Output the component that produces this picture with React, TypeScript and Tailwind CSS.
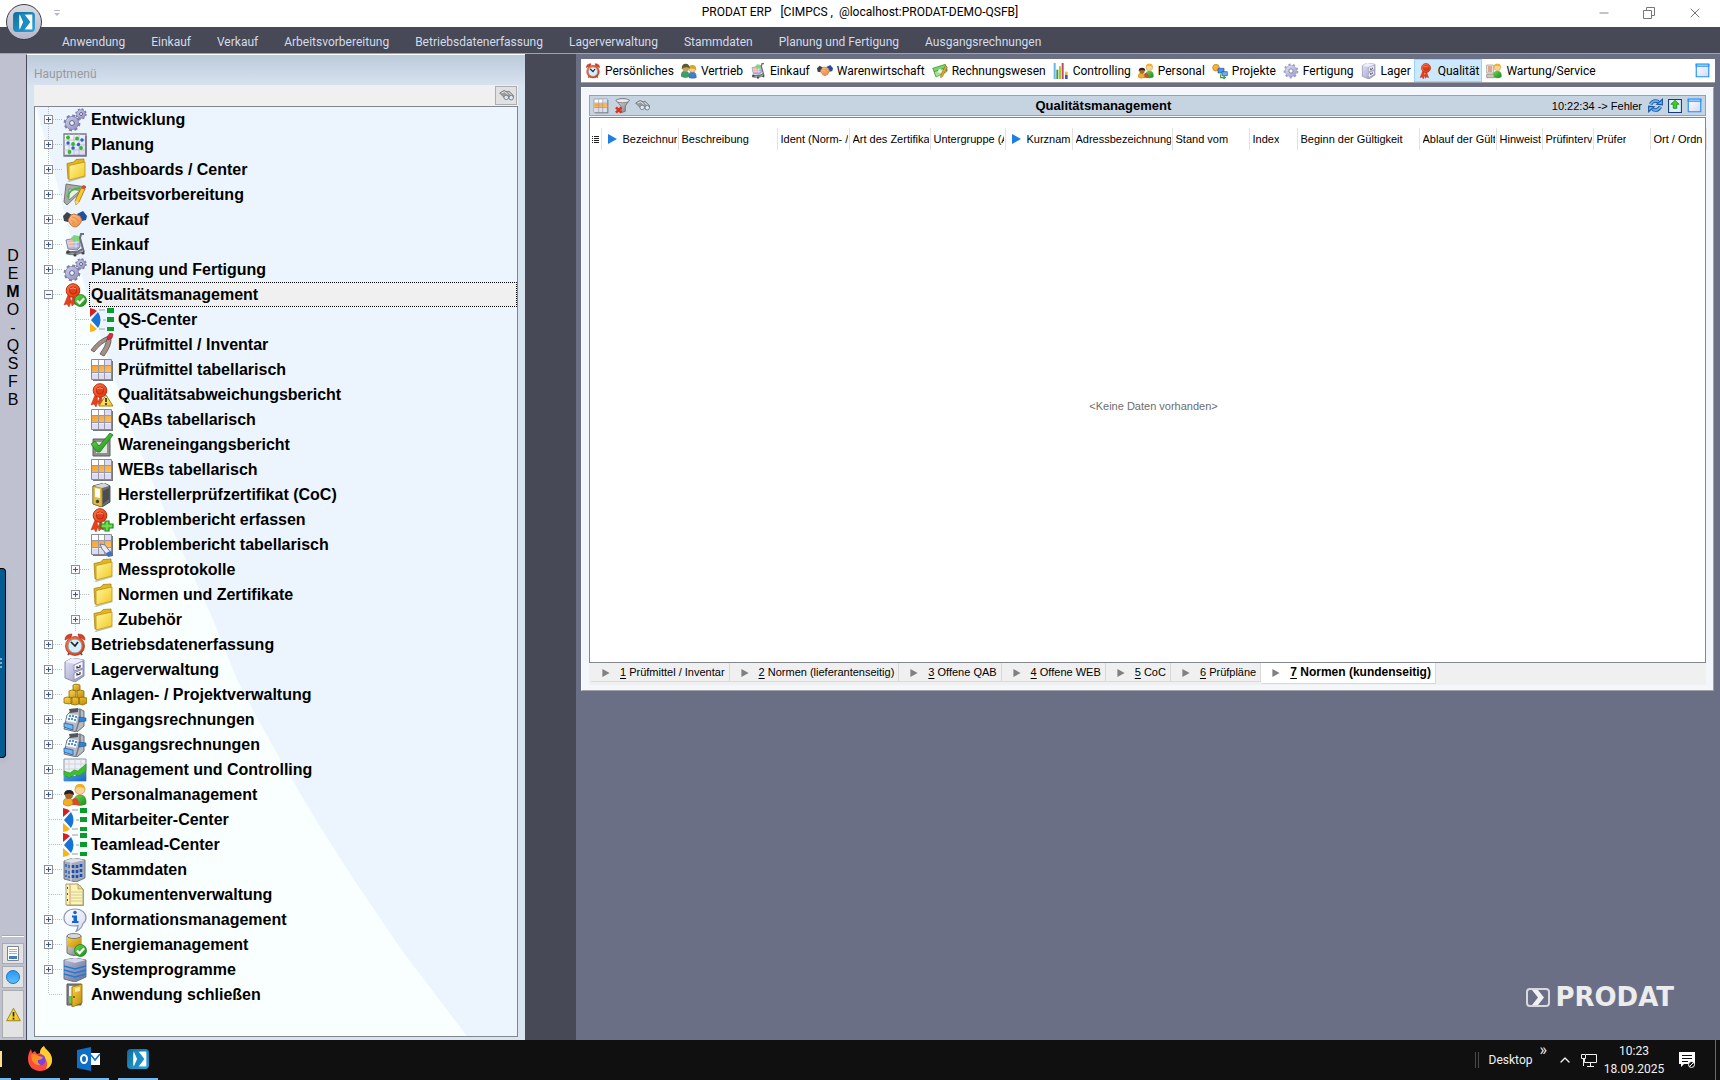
import React, { useState } from 'react';
import { ChevronUp, Minus, X } from 'lucide-react';

type IconName =
  | 'gears' | 'gear' | 'plan' | 'folder' | 'draft' | 'hands' | 'cart' | 'sealCheck' | 'sealWarn' | 'sealPlus' | 'seal'
  | 'center' | 'pliers' | 'grid' | 'gridEdit' | 'check' | 'binder' | 'clock' | 'cabinet' | 'gold' | 'register' | 'chart'
  | 'people' | 'building' | 'notes' | 'info' | 'battery' | 'server' | 'door' | 'money' | 'bars' | 'project' | 'couple'
  | 'service' | 'binoculars' | 'filter' | 'window' | 'refresh' | 'export' | 'warn';

const seal = (
  <g>
    <path d="M5 12 1 22l3-1 2 3 4-10zM11 13l3 9-3-1-2 2-2-9z" fill="#e8401c" stroke="#b52a10" strokeWidth=".5" />
    <circle cx="10" cy="7.500" r="6.800" fill="url(#red)" stroke="#c22a0c" strokeWidth="1" />
    <circle cx="10" cy="7.500" r="3.600" fill="#e63f1d" stroke="#a92508" strokeWidth=".8" />
    <path d="M7 6q3-2.500 6 0" fill="none" stroke="#ff9a72" />
  </g>
);

const checkBadge = (
  <g>
    <circle cx="17.500" cy="17.500" r="6" fill="url(#green)" stroke="#1d7a1a" strokeWidth=".8" />
    <path d="m14 17.500 2.600 2.700 4.600-5" fill="none" stroke="#fff" strokeWidth="2.200" />
  </g>
);

const grid = (
  <g>
    <path d="M3 3h20v20H3z" fill="#777" />
    <path d="M1.500 1.500h20v20h-20z" fill="#fff" stroke="#8a8a94" />
    <path d="M2 15.500h19v5.500H2zM15 2h6v5h-6z" fill="#dcdcf6" />
    <path d="M2 8h19v7H2z" fill="url(#orange)" />
    <path d="M8.500 2v19M14.500 2v19M2 7.500h19M2 14.500h19" stroke="#9a9aa4" strokeWidth="1" />
  </g>
);

const bigGear = (
  <g>
    <circle cx="9" cy="15" r="6.600" fill="none" stroke="#7c7ca8" strokeWidth="3.600" strokeDasharray="2.800 2.380" />
    <circle cx="9" cy="15" r="6.600" fill="url(#gearFill)" stroke="#8484b0" strokeWidth=".8" />
    <circle cx="9" cy="15" r="2.400" fill="#eef4fb" stroke="#62628e" strokeWidth="1" />
  </g>
);

const person = (
  <g>
    <path d="M11 21q-1-9 6-9t6 9q-6 3-12 0z" fill="url(#green)" stroke="#3a8a35" strokeWidth=".6" />
    <circle cx="17" cy="6.500" r="5" fill="#fbd39a" stroke="#c88a30" strokeWidth=".7" />
    <path d="M12 6q0-5 5-5t5 5q-3-2-6-2-2 0-4 2z" fill="#f2b21e" />
  </g>
);

const icons: Record<IconName, React.ReactNode> = {
  gears: (
    <g>
      {bigGear}
      <circle cx="18" cy="6" r="4.300" fill="none" stroke="#7c7ca8" strokeWidth="2.800" strokeDasharray="1.800 1.570" />
      <circle cx="18" cy="6" r="4.300" fill="url(#gearFill)" stroke="#8484b0" strokeWidth=".8" />
      <circle cx="18" cy="6" r="1.500" fill="#eef4fb" stroke="#62628e" />
    </g>
  ),
  gear: (
    <g>
      <circle cx="12" cy="12" r="8.800" fill="none" stroke="#9e9ec2" strokeWidth="4.600" strokeDasharray="3 3.140" />
      <circle cx="12" cy="12" r="8.600" fill="url(#lilac)" stroke="#a2a2c4" />
      <circle cx="12" cy="12" r="3.200" fill="#fff" stroke="#8080a8" strokeWidth="1.400" />
    </g>
  ),
  plan: (
    <g>
      <path d="M1 1h22v22H1z" fill="url(#paper)" stroke="#77778c" strokeWidth="1.300" />
      <path d="M6 1v21M11 1v21M16 1v21M1 7h21M1 12h21M1 17h21" stroke="#c2c2d8" />
      <path d="M2 22.500h21V3" stroke="#77778c" strokeWidth="1.600" fill="none" />
      <g fill="#38b81c"><circle cx="5" cy="4.500" r="1.900" /><circle cx="14" cy="5.500" r="1.900" /><circle cx="10" cy="11" r="1.900" /><circle cx="18" cy="15" r="1.900" /><circle cx="6.500" cy="19" r="1.900" /></g>
      <g fill="#2360d4"><circle cx="5" cy="10" r="1.700" /><circle cx="15.500" cy="11.500" r="1.700" /><circle cx="19" cy="7" r="1.700" /><circle cx="10" cy="15" r="1.700" /></g>
    </g>
  ),
  folder: (
    <g>
      <path d="m4 23 18-5 1 1-17 5z" fill="#9a9a8a" opacity=".6" />
      <path d="M4 5.500 11 4l2-2.500L21 1v16L5 21z" fill="#e5b51d" stroke="#a98312" strokeWidth=".8" />
      <path d="M6 7.500 22 4v14L6 22z" fill="url(#yellow)" stroke="#bd9312" strokeWidth=".8" />
    </g>
  ),
  draft: (
    <g>
      <path d="M3 1 23 4 4 22 1 19z" fill="#a7aaa8" stroke="#5f6461" strokeWidth=".8" />
      <path d="M6 6 17 7.500 6 17z" fill="#e9f2ea" stroke="#767c78" strokeWidth=".8" />
      <path d="M5 15Q5 6 17 5" fill="none" stroke="#3fb53a" strokeWidth="1.500" />
      <path d="m18 5 4 1-6 13-3 3-1-4z" fill="#f7c92a" stroke="#a66e15" strokeWidth=".8" />
      <path d="m18 5 4 1 1-3-3-1z" fill="#d8492c" />
      <path d="m12 18 4 1-3 3z" fill="#f0d7ae" />
    </g>
  ),
  hands: (
    <g>
      <path d="m0 8 4-4 5 3-4 7-4-1z" fill="#3d4250" />
      <path d="m24 8-4-5-6 3 5 7 4-1z" fill="#1f4fa5" />
      <path d="m5 12 3-5 3-1 6 2 2 4q-3 7-7 7t-7-7z" fill="url(#skin)" stroke="#b5652a" strokeWidth=".8" />
      <path d="m9 9 4 1 3 4M8 12l4 3M9 15l3 2" fill="none" stroke="#d98342" strokeWidth=".8" />
    </g>
  ),
  cart: (
    <g>
      <path d="M3 20q8 3 16-1" stroke="#80848c" strokeWidth="2" fill="none" />
      <path d="m3 7 14-3v10l-3 3-9-1z" fill="url(#lilac)" stroke="#85889a" strokeWidth="1" />
      <path d="m8 5 3-3 5 1v5l-6 2z" fill="#7ed67a" />
      <path d="m5 8 5-1v6l-4 1z" fill="#f6b39e" />
      <path d="M4 10l12-1M5 13h11M13 8v7" stroke="#e6e6f8" strokeWidth=".8" fill="none" />
      <path d="M21 1h-3l-1 4 3 11-6 3H6m14-3 1 3" fill="none" stroke="#6c707a" strokeWidth="2" />
      <circle cx="5" cy="19" r="1.800" fill="#444" /><circle cx="12" cy="22" r="1.600" fill="#444" /><circle cx="20" cy="20" r="1.600" fill="#444" />
    </g>
  ),
  seal: <g transform="translate(2 0)">{seal}</g>,
  sealCheck: <g>{seal}{checkBadge}</g>,
  sealWarn: (
    <g>
      {seal}
      <path d="m16 12 7 11H9z" fill="url(#yellow)" stroke="#a98312" strokeLinejoin="round" />
      <path d="M16 15v4m0 1v2" stroke="#222" strokeWidth="1.600" />
    </g>
  ),
  sealPlus: (
    <g>
      {seal}
      <path d="M15 13h4v3h4v4h-4v3h-4v-3h-4v-4h4z" fill="#6fdc4a" stroke="#1f8418" strokeWidth="1.200" />
    </g>
  ),
  center: (
    <g>
      <path d="M0 0q5 1 7 3L0 9z" fill="#d32020" />
      <path d="M1 12 8 4q5 8 0 16z" fill="#1673d8" />
      <path d="m0 15 7 6q-3 3-7 3z" fill="#fbb21a" />
      <path d="M9 2h6M13 12h3M9 21h6" stroke="#b9bec0" strokeWidth="1.500" />
      <path d="M17 0h7v5h-7zM17 9h7v5h-7zM17 19h7v4h-7z" fill="#089c28" />
    </g>
  ),
  pliers: (
    <g>
      <path d="M19 3Q9 6 1 17l3 2q8-10 15-12z" fill="#a58f89" stroke="#5e4c48" strokeWidth=".8" />
      <path d="M21 5q1 7-7 18l-4-2q6-8 7-15z" fill="#a58f89" stroke="#5e4c48" strokeWidth=".8" />
      <path d="m17 4 3-4 3 1-1 4-4 2z" fill="#e02838" stroke="#8e1420" strokeWidth=".6" />
    </g>
  ),
  grid,
  gridEdit: (
    <g>
      {grid}
      <path d="m10 11 5 1 6 8-3 3-6-7z" fill="#e9ebf4" stroke="#6f7693" />
      <path d="m16 20 5-2 2 5-5 1z" fill="#3f6fc0" />
    </g>
  ),
  check: (
    <g>
      <path d="M3 6h17v17H3z" fill="#8d8f8d" stroke="#5c5f5c" />
      <path d="M6 9h11v11H6z" fill="#e3e5e3" />
      <path d="m1 11 4-3 4 5L20 0l3 2L10 19H7z" fill="url(#green)" stroke="#1c7f19" strokeWidth=".8" />
    </g>
  ),
  binder: (
    <g>
      <path d="m3 3 11-3 6 3v16l-8 5-9-3z" fill="#6b6d70" stroke="#35373a" strokeWidth=".8" />
      <path d="m3 3 9 2v19l-9-3z" fill="#e2bb3b" stroke="#8d7420" strokeWidth=".6" />
      <path d="m5 5 5 1v9l-5-1z" fill="#fff" /><circle cx="7.500" cy="18.500" r="1.700" fill="#444" />
      <path d="m4 3 10-3 5 3-7 2z" fill="#d6d8da" />
      <path d="m13 8 6-3v11l-6 5z" fill="#4b4d50" />
    </g>
  ),
  clock: (
    <g>
      <path d="m5 22 3-4m11 4-3-4" stroke="#555" strokeWidth="2" />
      <path d="M2 7q0-6 7-6l-1 3zM22 7q0-6-7-6l1 3z" fill="#e2401c" stroke="#98240b" strokeWidth=".6" />
      <circle cx="12" cy="13" r="9.500" fill="url(#red)" stroke="#a92d10" strokeWidth=".7" />
      <circle cx="12" cy="13" r="7" fill="#d2effd" stroke="#8e9aa4" />
      <path d="m8 9 4 4 3-4" fill="none" stroke="#222" strokeWidth="1.700" />
    </g>
  ),
  cabinet: (
    <g>
      <path d="m2 4 7-4 12 2v16l-9 6-10-4z" fill="url(#lilac)" stroke="#7f7fa6" strokeWidth=".9" />
      <path d="m2 4 7-4 12 2-9 4z" fill="#eeeeff" />
      <path d="m11 7 9-4v7l-9 3zM11 15l9-4v6l-9 5z" fill="#f4f4ff" stroke="#8686ac" strokeWidth=".8" />
      <path d="M14 8v2l3-1V7M14 15v2l3-1v-2" fill="none" stroke="#333" strokeWidth="1.200" />
    </g>
  ),
  gold: (
    <g fill="url(#gold)" stroke="#8f6a06" strokeWidth=".8">
      <path d="m10 2 3-1 4 1v5l-3 1-4-1z" /><path d="m6 8 3-1 4 1v6l-3 1-4-1zM14 8l3-1 4 1v6l-3 1-4-1z" />
      <path d="m1 15 3-1 5 1v5l-3 1-5-1zM8 15l3-1 5 1v6l-4 1-4-1zM16 15l3-1 5 1v5l-4 2-4-1z" />
    </g>
  ),
  register: (
    <g>
      <path d="m9 2 8-1 4 2v15l-7 6-13-3 3-14z" fill="#b8bbc2" stroke="#5f6270" strokeWidth=".9" />
      <path d="M17 1v9l-4 13" fill="none" stroke="#777b88" strokeWidth="1.500" />
      <path d="m6 1 9-1v4l-8 1z" fill="#53565e" />
      <path d="m5 6 10 1-2 8-10-2z" fill="#f2f5fa" />
      <path d="M6 8h2m1 0h2m1 1h2M5 11h2m1 0h2m1 1h2" stroke="#1f75c8" strokeWidth="1.700" />
      <path d="m1 15 9 2v5l-9-3z" fill="#6fb6f4" stroke="#235f9e" strokeWidth=".8" />
      <path d="m16 9 7 1v3l-7 1z" fill="#2d83d6" stroke="#1b5490" strokeWidth=".6" />
    </g>
  ),
  chart: (
    <g>
      <path d="M1 1h22v22H1z" fill="#eef0f6" stroke="#8e95a6" />
      <path d="M6 1v20M12 1v20M18 1v20M1 6h22M1 11h22" stroke="#c9cdd9" strokeWidth=".8" />
      <path d="m1 18 6-1 5 1 5-5 6-2v12H1z" fill="url(#blue)" />
      <path d="m1 13 6 2 4-3 4 1 8-7v7l-7 5-4-2-6 4-5-3z" fill="#3cbf2c" stroke="#249419" strokeWidth=".6" />
    </g>
  ),
  people: (
    <g>
      {person}
      <path d="M8 22q0-7 4-7t4 7z" fill="#d94a28" />
      <path d="M0 21q0-6 5-6t5 6q-5 4-10 0z" fill="#f2ad24" stroke="#af7414" strokeWidth=".6" />
      <circle cx="6" cy="12" r="4" fill="#a9672d" /><path d="M1 12q0-5 5-5t5 5q-5-3-10 0z" fill="#222" />
    </g>
  ),
  couple: (
    <g>
      <path d="M12 22q-1-9 5-9t6 9q-5 2-11 0z" fill="#3d7fd0" stroke="#1f4f94" strokeWidth=".6" />
      <circle cx="17" cy="9" r="5" fill="#f6cf8e" stroke="#b98416" strokeWidth=".6" /><path d="M11 10q0-7 6-7t6 8q-5-5-12-1z" fill="#d9a520" />
      <path d="M0 20q0-8 6-8t7 8q-6 4-13 0z" fill="#3f9f6a" stroke="#27754b" strokeWidth=".6" />
      <circle cx="7" cy="8" r="5" fill="#c9a45e" /><path d="M1 9q0-8 6-8t6 7q-6-4-12 1z" fill="#5c5a34" />
    </g>
  ),
  service: (
    <g>
      {person}
      <path d="M1 3h10v12H1z" fill="#f0efe4" stroke="#8c8c80" /><path d="M3 6h6M3 9h6M3 12h6" stroke="#d15b40" strokeWidth="1.500" />
      <path d="M1 17h11v5H1z" fill="#c9c9bc" stroke="#80806f" />
    </g>
  ),
  building: (
    <g>
      <path d="m1 3 9-3 12 2v18l-9 4-12-3z" fill="#a7aab8" stroke="#666a7c" strokeWidth=".9" />
      <path d="m1 3 9-3 12 2-13 3z" fill="#dfe1e8" />
      <path d="M8 5v18" stroke="#e3e5ec" />
      <path d="M10 7v3m4-3v3m4-4v3m-8 3v3m4-3v3m4-4v3m-8 3v3m4-3v3m4-4v3" stroke="#1452b8" strokeWidth="2.600" />
      <path d="M3 6v3m3-2v3m-3 2v3m3-2v3m-3 1v2m3-1v2" stroke="#3a6fc4" strokeWidth="1.800" />
    </g>
  ),
  notes: (
    <g>
      <path d="M4 2h13l4 5v16H4z" fill="#8f8b68" opacity=".7" />
      <path d="M3 1h12l5 5v16H3z" fill="#fcf5b8" stroke="#9b9566" strokeWidth=".9" />
      <path d="M15 1v5h5z" fill="#f0e27f" stroke="#9b9566" strokeWidth=".7" />
      <path d="M8 9h11M8 12h11M8 15h11M8 18h11" stroke="#c9c189" strokeWidth=".8" /><path d="M7 1v21" stroke="#e48a70" />
      <path d="M4 5h1m-1 6h1m-1 6h1" stroke="#222" strokeWidth="1.500" />
    </g>
  ),
  info: (
    <g>
      <path d="M12 1C5 1 1 5 1 10s4 8 10 8q3 0 4-.5 0 3-2 6 6-3 7-8 3-2 3-6c0-5-5-8.500-11-8.500z" fill="url(#paper)" stroke="#8f93b4" strokeWidth="1.200" />
      <circle cx="12" cy="4.500" r="1.800" fill="#1565d6" />
      <path d="M9 7.500h5V13h1.500v2H9v-2h1.500V9.500H9z" fill="#1565d6" />
    </g>
  ),
  battery: (
    <g>
      <path d="M4 3v17q7 5 14 0V3z" fill="url(#steel)" stroke="#57595c" strokeWidth=".8" />
      <path d="M4 3v10q7 3 14 0V3z" fill="url(#gold)" />
      <ellipse cx="11" cy="3" rx="7" ry="2.500" fill="#d6d8da" stroke="#666" strokeWidth=".8" />
      {checkBadge}
    </g>
  ),
  server: (
    <g>
      <path d="m1 2 11-2 11 2v17l-11 5-11-3z" fill="url(#steelBlue)" stroke="#646a8a" strokeWidth=".9" />
      <path d="m1 2 11-2 11 2-11 3z" fill="#d5d8e8" />
      <path d="m1 8 11 3 11-3M1 12l11 3 11-3M1 16l11 3 11-3" fill="none" stroke="#1f7ad6" strokeWidth="1.500" />
    </g>
  ),
  door: (
    <g>
      <path d="M4 1h14v21H4z" fill="#7d8088" stroke="#585b62" /><path d="M6 3h9v17H6z" fill="#e8f4e6" />
      <path d="M6 13h4v7H6z" fill="#62cf3e" />
      <path d="M9 4 19 1v19L9 24z" fill="url(#gold)" stroke="#906806" strokeWidth=".8" />
      <path d="m12 5 5-1v4l-5 1z" fill="#fbe9a2" /><circle cx="11" cy="14" r="1" fill="#6b4c00" />
    </g>
  ),
  money: (
    <g>
      <path d="M1 8 20 2l3 9L6 19z" fill="#7fd36b" stroke="#2c8a28" /><path d="m3 13 18-6 1 6L6 21z" fill="#a7e490" stroke="#2c8a28" />
      <circle cx="12" cy="12" r="3" fill="#e7f9dd" /><path d="m20 4 3 2-7 14-3 2v-3z" fill="#f0a03a" stroke="#9a5b14" strokeWidth=".8" />
    </g>
  ),
  bars: (
    <g>
      <path d="M1 0h3v24H1z" fill="#6ab6ec" /><path d="M5 10h3v14H5z" fill="#3f9a3e" /><path d="M9 5h3v19H9z" fill="#a4c93c" />
      <path d="M13 0h3v24h-3z" fill="#c9466e" /><path d="M18 18h4v6h-4z" fill="#3657c8" /><path d="M18 13h4v5h-4z" fill="#f0b840" />
    </g>
  ),
  project: (
    <g>
      <circle cx="6" cy="7" r="5" fill="#f6b33a" stroke="#c07a14" /><path d="M9 8h9v7H9z" fill="#4c95e8" stroke="#1f4c9e" />
      <path d="M15 13h8v6h-8z" fill="#6fb0f4" stroke="#1f4c9e" /><path d="M13 17v5h6m-2-3 3 3-3 2" fill="none" stroke="#38a52c" strokeWidth="1.800" />
    </g>
  ),
  binoculars: (
    <g>
      <path d="m1 8 7-4 5 2 3-1 7 7v3l-4 4-5-4-4 2-5-5z" fill="#9b9da0" stroke="#5b5d60" />
      <circle cx="11.500" cy="15" r="3.600" fill="#dcebf8" stroke="#6d7278" strokeWidth="1.300" /><circle cx="19.500" cy="15.500" r="3.600" fill="#dcebf8" stroke="#6d7278" strokeWidth="1.300" />
      <path d="m4 8 5-2 5 4m1-3 5 4" stroke="#e6e8ea" strokeWidth="1.500" fill="none" />
    </g>
  ),
  filter: (
    <g>
      <path d="M3 3q10-4 20 0l-6 9v8l-6 2v-9z" fill="url(#steel)" stroke="#5c5e62" /><ellipse cx="13" cy="4" rx="10" ry="3" fill="#e8eaec" stroke="#66686c" />
      <path d="m3 14 8 8m0-8-8 8" stroke="#e0301e" strokeWidth="3.800" />
    </g>
  ),
  window: (
    <g>
      <path d="M2 2h20v20H2z" fill="url(#paper)" stroke="#1e90ff" strokeWidth="1.800" /><path d="M1 1h22v5H1z" fill="#1e90ff" /><path d="M3 2.500h18v2H3z" fill="#a8d6ff" />
    </g>
  ),
  refresh: (
    <g fill="none" stroke="#1c55a4" strokeWidth="5.500">
      <path d="M4 10q5-8 13-4M20 14q-5 8-13 4" /><path d="m14 10 9 1V2zM10 14l-9-1v9z" fill="#62b1f2" strokeWidth="1.800" />
      <path d="M4 10q5-8 13-4M20 14q-5 8-13 4" stroke="#62b1f2" strokeWidth="2.800" />
    </g>
  ),
  export: (
    <g>
      <path d="M1 1h22v22H1z" fill="#d9f0fb" stroke="#16387e" strokeWidth="1.800" /><path d="m12 2 7 7h-4v7H9V9H5z" fill="#3fd01c" stroke="#157a0a" strokeWidth="1.200" />
    </g>
  ),
  warn: (
    <g>
      <path d="m12 2 11 20H1z" fill="url(#yellowDeep)" stroke="#93812c" strokeWidth="1.500" strokeLinejoin="round" /><path d="M12 8v7m0 2v3" stroke="#222" strokeWidth="2.600" />
    </g>
  ),
};

const Icon = ({ name, className }: { name: IconName; className: string }) => (
  <svg viewBox="0 0 24 24" className={className} aria-hidden="true">{icons[name]}</svg>
);

const gradients: [string, string, string][] = [
  ['red', '#ff7a4c', '#dd2f0c'],
  ['green', '#6fdc4f', '#178a1a'],
  ['orange', '#f6a030', '#ffc468'],
  ['lilac', '#e4e4fb', '#9a9ac4'],
  ['gearFill', '#cfcfee', '#8f8fbc'],
  ['paper', '#ffffff', '#d4d8f2'],
  ['yellow', '#fff6a0', '#f2c81c'],
  ['yellowDeep', '#fff04a', '#f0c010'],
  ['skin', '#ffc48c', '#f08a3c'],
  ['gold', '#fcd548', '#c08a08'],
  ['blue', '#5aaef4', '#1c66c4'],
  ['steel', '#e2e4e6', '#77797c'],
  ['steelBlue', '#b8bdd6', '#666d94'],
  ['brand', '#0f6c9c', '#2ba6dc'],
];

const Gradients = () => (
  <svg className="absolute size-0" aria-hidden="true">
    <defs>
      {gradients.map(([id, from, to]) => (
        <linearGradient key={id} id={id} x1="0" y1="0" x2="1" y2="1">
          <stop offset="0" stopColor={from} />
          <stop offset="1" stopColor={to} />
        </linearGradient>
      ))}
    </defs>
  </svg>
);

const BrandMark = ({ className }: { className: string }) => (
  <svg viewBox="0 0 24 22" className={className} aria-hidden="true">
    <rect x="0" y="0" width="24" height="22" rx="4" fill="url(#brand)" />
    <path d="M7 3h14v16H7z" fill="#fff" />
    <path d="M7 2h5l7 9-7 9H7l4-9z" fill="#1b8cc4" />
    <path d="M7 4v14l3-7zM14 3h7v16h-7l6-8z" fill="#fff" />
  </svg>
);

interface TreeItem {
  label: string;
  icon: IconName;
  expandable?: boolean;
  children?: TreeItem[];
}

const tree: TreeItem[] = [
  { label: 'Entwicklung', icon: 'gears', expandable: true },
  { label: 'Planung', icon: 'plan', expandable: true },
  { label: 'Dashboards / Center', icon: 'folder', expandable: true },
  { label: 'Arbeitsvorbereitung', icon: 'draft', expandable: true },
  { label: 'Verkauf', icon: 'hands', expandable: true },
  { label: 'Einkauf', icon: 'cart', expandable: true },
  { label: 'Planung und Fertigung', icon: 'gears', expandable: true },
  {
    label: 'Qualitätsmanagement',
    icon: 'sealCheck',
    expandable: true,
    children: [
      { label: 'QS-Center', icon: 'center' },
      { label: 'Prüfmittel / Inventar', icon: 'pliers' },
      { label: 'Prüfmittel tabellarisch', icon: 'grid' },
      { label: 'Qualitätsabweichungsbericht', icon: 'sealWarn' },
      { label: 'QABs tabellarisch', icon: 'grid' },
      { label: 'Wareneingangsbericht', icon: 'check' },
      { label: 'WEBs tabellarisch', icon: 'grid' },
      { label: 'Herstellerprüfzertifikat (CoC)', icon: 'binder' },
      { label: 'Problembericht erfassen', icon: 'sealPlus' },
      { label: 'Problembericht tabellarisch', icon: 'gridEdit' },
      { label: 'Messprotokolle', icon: 'folder', expandable: true },
      { label: 'Normen und Zertifikate', icon: 'folder', expandable: true },
      { label: 'Zubehör', icon: 'folder', expandable: true },
    ],
  },
  { label: 'Betriebsdatenerfassung', icon: 'clock', expandable: true },
  { label: 'Lagerverwaltung', icon: 'cabinet', expandable: true },
  { label: 'Anlagen- / Projektverwaltung', icon: 'gold', expandable: true },
  { label: 'Eingangsrechnungen', icon: 'register', expandable: true },
  { label: 'Ausgangsrechnungen', icon: 'register', expandable: true },
  { label: 'Management und Controlling', icon: 'chart', expandable: true },
  { label: 'Personalmanagement', icon: 'people', expandable: true },
  { label: 'Mitarbeiter-Center', icon: 'center' },
  { label: 'Teamlead-Center', icon: 'center' },
  { label: 'Stammdaten', icon: 'building', expandable: true },
  { label: 'Dokumentenverwaltung', icon: 'notes' },
  { label: 'Informationsmanagement', icon: 'info', expandable: true },
  { label: 'Energiemanagement', icon: 'battery', expandable: true },
  { label: 'Systemprogramme', icon: 'server', expandable: true },
  { label: 'Anwendung schließen', icon: 'door' },
];

const menu = ['Anwendung', 'Einkauf', 'Verkauf', 'Arbeitsvorbereitung', 'Betriebsdatenerfassung', 'Lagerverwaltung', 'Stammdaten', 'Planung und Fertigung', 'Ausgangsrechnungen'];

const areas: { label: string; icon: IconName }[] = [
  { label: 'Persönliches', icon: 'clock' },
  { label: 'Vertrieb', icon: 'couple' },
  { label: 'Einkauf', icon: 'cart' },
  { label: 'Warenwirtschaft', icon: 'hands' },
  { label: 'Rechnungswesen', icon: 'money' },
  { label: 'Controlling', icon: 'bars' },
  { label: 'Personal', icon: 'people' },
  { label: 'Projekte', icon: 'project' },
  { label: 'Fertigung', icon: 'gear' },
  { label: 'Lager', icon: 'cabinet' },
  { label: 'Qualität', icon: 'seal' },
  { label: 'Wartung/Service', icon: 'service' },
];

const columns: { label: string; width: string; marked?: boolean }[] = [
  { label: 'Bezeichnun', width: 'w-[77px]', marked: true },
  { label: 'Beschreibung', width: 'w-[99px]' },
  { label: 'Ident (Norm- /', width: 'w-[72px]' },
  { label: 'Art des Zertifika', width: 'w-[81px]' },
  { label: 'Untergruppe (A', width: 'w-[75px]' },
  { label: 'Kurznam', width: 'w-[67px]', marked: true },
  { label: 'Adressbezeichnung', width: 'w-[100px]' },
  { label: 'Stand vom', width: 'w-[77px]' },
  { label: 'Index', width: 'w-[48px]' },
  { label: 'Beginn der Gültigkeit', width: 'w-[122px]' },
  { label: 'Ablauf der Gült', width: 'w-[77px]' },
  { label: 'Hinweist', width: 'w-[46px]' },
  { label: 'Prüfinterv', width: 'w-[51px]' },
  { label: 'Prüfer', width: 'w-[57px]' },
  { label: 'Ort / Ordn', width: 'w-[56px]' },
];

const tabs = ['Prüfmittel / Inventar', 'Normen (lieferantenseitig)', 'Offene QAB', 'Offene WEB', 'CoC', 'Prüfpläne', 'Normen (kundenseitig)'];

// Connector lines of one tree level, 27 x 25 per cell
const Branch = ({ last, line = true }: { last?: boolean; line?: boolean }) => (
  <svg viewBox="0 0 27 25" className="h-[25px] w-[27px] shrink-0" aria-hidden="true">
    <path d={last ? 'M13.500 0v12' : 'M13.500 0v25'} stroke="#b9bcc2" strokeDasharray="1 1" />
    {line && <path d="M14 12.500h13" stroke="#b9bcc2" strokeDasharray="1 1" />}
  </svg>
);

const Expander = ({ open, label, onClick }: { open: boolean; label: string; onClick: () => void }) => (
  <button type="button" aria-label={label} onClick={onClick} className="shrink-0">
    <svg viewBox="0 0 27 25" className="h-[25px] w-[27px]" aria-hidden="true">
      <path d="M13.500 0v8M13.500 17v8M18 12.500h9" stroke="#b9bcc2" strokeDasharray="1 1" />
      <rect x="9.500" y="8.500" width="8" height="8" fill="#fafafa" stroke="#8f8f8f" />
      <path d={open ? 'M11 12.500h5' : 'M11 12.500h5M13.500 10v5'} stroke="#3a55a4" />
    </svg>
  </button>
);

interface TreeRowProps {
  item: TreeItem;
  nested?: boolean;
  last?: boolean;
  selected: string;
  onSelect: (label: string) => void;
}

const TreeRow = ({ item, nested, last, selected, onSelect }: TreeRowProps) => {
  const [open, setOpen] = useState(Boolean(item.children));
  return (
    <li>
      <div className="flex h-[25px] items-center">
        {nested && <Branch line={false} />}
        {item.expandable ? (
          <Expander open={open && Boolean(item.children)} label={`${item.label} auf- oder zuklappen`} onClick={() => setOpen(!open)} />
        ) : (
          <Branch last={last} />
        )}
        <Icon name={item.icon} className="ml-px mr-[2px] size-6 shrink-0" />
        <button
          type="button"
          onClick={() => onSelect(item.label)}
          className={`h-[25px] flex-1 border border-dotted pl-px text-left text-[16px] leading-[23px] font-bold whitespace-nowrap ${
            selected === item.label ? 'border-black bg-[#f0f0f0]' : 'border-transparent'
          }`}
        >
          {item.label}
        </button>
      </div>
      {open && item.children && (
        <ul>
          {item.children.map((child) => (
            <TreeRow key={child.label} item={child} nested selected={selected} onSelect={onSelect} />
          ))}
        </ul>
      )}
    </li>
  );
};

const TitleBar = () => (
  <header className="relative">
    <div className="flex h-[27px] items-center bg-white">
      <div className="flex w-40 pl-[54px]">
        <svg viewBox="0 0 6 7" className="h-[7px] w-[6px]" aria-hidden="true">
          <path d="M0 .5h6" stroke="#b8b8c4" />
          <path d="M0 3h6L3 6z" fill="#b8b8c4" />
        </svg>
      </div>
      <h1 className="flex-1 pb-[3px] text-center text-[12px] leading-4 whitespace-pre text-black">{'PRODAT ERP   [CIMPCS ,  @localhost:PRODAT-DEMO-QSFB]'}</h1>
      <div className="flex w-40 justify-end gap-[32px] pr-[17px] pb-[2px] text-[#777]">
        <button type="button" aria-label="Minimieren"><Minus className="size-[14px]" strokeWidth={1.5} /></button>
        <button type="button" aria-label="Wiederherstellen">
          <svg viewBox="0 0 12 12" className="size-3" fill="none" stroke="currentColor" aria-hidden="true">
            <path d="M.5 3.500h8v8h-8zM3.500 3V.5h8v8H9" />
          </svg>
        </button>
        <button type="button" aria-label="Schließen"><X className="size-[16px]" strokeWidth={1.5} /></button>
      </div>
    </div>
    <nav className="flex h-[27px] items-center gap-[26px] border-b border-[#a3a3a8] bg-[#474957] pt-[3px] pl-[62px] text-[12px] text-[#d3dcea]">
      {menu.map((label) => (
        <a key={label} href="#" className="whitespace-nowrap">{label}</a>
      ))}
    </nav>
    <button type="button" aria-label="PRODAT" className="absolute top-1 left-[6px] flex size-9 items-center justify-center rounded-full border border-[#3c3d48] bg-linear-to-b from-[#dcdce2] to-[#b6b7cc]">
      <BrandMark className="h-5 w-6" />
    </button>
  </header>
);

const SideStrip = () => (
  <aside className="relative flex w-[26px] shrink-0 flex-col items-center bg-[#bfc0d0] pb-[2px]">
    <p className="flex flex-col items-center pt-[193px] text-[16px] leading-[18px] text-black">
      {'DEMO-QSFB'.split('').map((letter, i) => (
        <span key={i} className={letter === 'M' ? 'font-bold' : ''}>{letter}</span>
      ))}
    </p>
    <div className="mt-auto flex w-[22px] flex-col gap-[2px]">
      <span className="mb-1 h-[2px] border-b border-white bg-[#a8a8b4]" />
      <button type="button" aria-label="Protokoll" className="flex h-[21px] items-center justify-center border border-[#acacac] bg-[#e3e3e3]">
        <svg viewBox="0 0 12 15" className="h-[15px] w-3" aria-hidden="true">
          <path d="M.5.5h11v14H.5z" fill="#fff" stroke="#7b8590" />
          <path d="M2 3.500h8M2 5.500h8M2 7.500h8" stroke="#8db8e0" />
          <path d="M2 10h8v3H2z" fill="#3f7fc0" />
        </svg>
      </button>
      <button type="button" aria-label="Status" className="flex h-[22px] items-center justify-center border border-[#acacac] bg-[#e3e3e3]">
        <span className="size-[14px] rounded-full border border-[#1874c8] bg-linear-to-b from-[#2f96f4] to-[#56c0ff]" />
      </button>
      <button type="button" aria-label="Warnungen" className="flex h-12 items-center justify-center border border-[#acacac] bg-[#e3e3e3]">
        <Icon name="warn" className="size-[15px]" />
      </button>
    </div>
    <button type="button" aria-label="Leiste öffnen" className="absolute top-[514px] left-0 flex h-[190px] w-[6px] items-center rounded-r border border-l-0 border-black bg-[#005b8f] shadow-md">
      <svg viewBox="0 0 2 10" className="h-[10px] w-[2px]" aria-hidden="true"><path d="M0 1h2M0 5h2M0 9h2" stroke="#fff" /></svg>
    </button>
  </aside>
);

const MainMenu = () => {
  const [selected, setSelected] = useState('Qualitätsmanagement');
  return (
    <section className="flex w-[499px] shrink-0 flex-col border-t border-l border-t-white border-l-[#474957] bg-[#d9e4f1] bg-linear-to-b from-[#bccada] to-[#d9e4f1] to-[32px] px-[7px] pb-[3px]">
      <h2 className="h-[30px] pt-[11px] font-[Roboto,sans-serif] text-[12px] leading-4 text-[#9a9a9a]">Hauptmenü</h2>
      <form className="flex h-[21px] bg-[#f0f0f0]" onSubmit={(e) => e.preventDefault()}>
        <input type="text" aria-label="Menü durchsuchen" className="min-w-0 flex-1 bg-transparent px-1 text-[12px] outline-none" />
        <button type="submit" aria-label="Suchen" className="my-px mr-px flex w-[22px] items-center justify-center border border-[#adadad] bg-[#e1e1e1]">
          <Icon name="binoculars" className="size-[15px]" />
        </button>
      </form>
      <div className="relative isolate flex-1 border border-[#82878f] bg-[#ecf5fd] pb-7">
        <svg viewBox="0 0 482 930" preserveAspectRatio="none" className="absolute inset-0 -z-10 size-full" aria-hidden="true">
          <path d="M1 0C15 50 22 75 28 100Q48 180 80 273L97 323 120 382 145 440 178 513 202 573 224 615 255 670 286 722 320 775 368 846 432 930H0V0z" fill="#f9fffe" />
        </svg>
        <ul>
          {tree.map((item, i) => (
            <TreeRow key={item.label} item={item} last={i === tree.length - 1} selected={selected} onSelect={setSelected} />
          ))}
        </ul>
      </div>
    </section>
  );
};

const AreaBar = () => (
  <nav className="flex h-6 items-center border-b border-[#a0a0a0] bg-white pr-[5px] text-[12px] text-black">
    {areas.map(({ label, icon }) => (
      <button
        key={label}
        type="button"
        className={`flex h-[23px] items-center gap-1 border pr-[2px] pl-[3px] whitespace-nowrap ${
          label === 'Qualität' ? 'border-[#99d1ff] bg-[#cce8ff]' : 'border-transparent'
        }`}
      >
        <Icon name={icon} className="size-4" />
        {label}
      </button>
    ))}
    <button type="button" aria-label="Fenster" className="ml-auto"><Icon name="window" className="size-[15px]" /></button>
  </nav>
);

const Arrow = ({ className }: { className: string }) => (
  <svg viewBox="0 0 9 10" className={className} aria-hidden="true"><path d="M0 0 9 5 0 10z" fill="currentColor" /></svg>
);

const QualityWindow = () => {
  const [active, setActive] = useState(tabs.length - 1);
  return (
    <section className="mr-px border border-t-white border-l-white border-r-[#a0a0a0] border-b-[#a0a0a0] bg-[#f3f7fc] px-[7px] pt-[7px] pb-[5px] font-['Liberation_Sans',Arial,sans-serif]">
      <div className="flex h-[21px] items-center border border-[#a0a0a0] bg-[#c6d3e1] px-[3px]">
        <div className="flex items-center gap-[5px]">
          <button type="button" aria-label="Tabelle"><Icon name="grid" className="size-4" /></button>
          <button type="button" aria-label="Filter löschen"><Icon name="filter" className="size-4" /></button>
          <button type="button" aria-label="Suchen"><Icon name="binoculars" className="size-[15px]" /></button>
        </div>
        <h2 className="flex-1 pl-[5px] text-center text-[13px] leading-4 font-bold">Qualitätsmanagement</h2>
        <p className="pr-[6px] text-[11px] leading-4">10:22:34 -&gt; Fehler</p>
        <div className="flex items-center gap-[5px]">
          <button type="button" aria-label="Aktualisieren"><Icon name="refresh" className="size-[15px]" /></button>
          <button type="button" aria-label="Exportieren"><Icon name="export" className="size-[14px]" /></button>
          <button type="button" aria-label="Maximieren"><Icon name="window" className="size-[15px]" /></button>
        </div>
      </div>
      <div className="mt-px flex h-[546px] flex-col border border-[#82878f] bg-white pt-[10px]">
        <table className="w-full table-fixed border-collapse text-[11px]">
          <thead>
            <tr className="h-[22px]">
              <th className="w-[11px] border-r border-[#e2e2e2] p-0">
                <svg viewBox="0 0 7 9" className="ml-[2px] h-[9px] w-[7px]" role="img" aria-label="Spalten">
                  <path d="M0 1.500h1m1 0h5M0 3.500h1m1 0h5M0 5.500h1m1 0h5M0 7.500h1m1 0h5" stroke="#222" />
                </svg>
              </th>
              {columns.map(({ label, width, marked }) => (
                <th key={label} className={`${width} border-r border-[#e2e2e2] py-0 pr-px pl-[3px] text-left font-normal`}>
                  <span className="flex items-center overflow-hidden whitespace-nowrap">
                    {marked && <Arrow className="mr-[6px] ml-[3px] h-[10px] w-[9px] shrink-0 text-[#1e7fe0]" />}
                    <span className="overflow-hidden">{label}</span>
                  </span>
                </th>
              ))}
            </tr>
          </thead>
        </table>
        <p className="flex flex-1 items-center justify-center pl-3 text-[11px] text-[#6d6d6d]">&lt;Keine Daten vorhanden&gt;</p>
      </div>
      <div role="tablist" className="flex h-[22px] items-start bg-[#f0f0f0] pl-[2px] text-[11px]">
        {tabs.map((label, i) => (
          <button
            key={label}
            type="button"
            role="tab"
            aria-selected={active === i}
            onClick={() => setActive(i)}
            className={`flex border-r border-b border-[#d9d9d9] pr-1 pl-[11px] leading-[18px] whitespace-nowrap ${
              active === i ? 'h-[21px] bg-white text-[12px] font-bold' : 'h-[19px]'
            }`}
          >
            <Arrow className="mt-[6px] mr-[10px] h-2 w-2 text-[#808080]" />
            <span><u className="underline-offset-2">{i + 1}</u> {label}</span>
          </button>
        ))}
      </div>
    </section>
  );
};

const Workspace = () => (
  <main className="flex min-w-0 flex-1 flex-col bg-[#6b6f86] pt-[5px] pr-[5px] pl-[5px]">
    <AreaBar />
    <div className="h-1" />
    <QualityWindow />
    <div className="mt-auto flex items-center justify-end gap-[5px] pr-[41px] pb-7 text-[#ececec]">
      <svg viewBox="0 0 24 19" className="h-[19px] w-6" aria-hidden="true">
        <rect x="1" y="1" width="22" height="17" rx="3" fill="none" stroke="#d8d9de" strokeWidth="2" />
        <path d="M6 2h6l6 7.500-6 7.500H6l6-7.500z" fill="#f2f2f2" />
      </svg>
      <span className="font-['DejaVu_Sans',sans-serif] text-[26px] leading-[30px] font-bold">PRODAT</span>
    </div>
  </main>
);

const Taskbar = () => (
  <footer className="flex h-10 items-stretch bg-[#101010] text-[12px] text-[#f0f0f0]">
    <button type="button" aria-label="Explorer" className="flex w-[11px] items-center border-b-2 border-[#76b9ed]">
      <span className="h-4 w-[2px] bg-[#ffdf8c]" />
    </button>
    <button type="button" aria-label="Firefox" className="ml-[9px] flex w-10 items-center justify-center border-b-2 border-[#76b9ed]">
      <svg viewBox="0 0 24 26" className="h-[26px] w-6" aria-hidden="true">
        <path d="M12 25C5 25 0 20 0 13 0 9 1 6 3 3l1 4 3-2 2 3 3-1c0-3 1-5 4-7 1 4 8 6 8 14 0 6-5 11-12 11z" fill="#ff4b3e" />
        <path d="M16 0c1 4 8 6 8 14 0 5-3 8-6 9 2-5 1-8-1-11 0-3-5-4-5-5 0-3 1-5 4-7z" fill="#ffcf32" />
        <circle cx="12" cy="14" r="5.500" fill="#7542e5" />
        <path d="M3 9q4-2 8 1l4 1q-1 3-5 3-1 3 3 5-7 1-9-5z" fill="#ff8f1f" />
      </svg>
    </button>
    <button type="button" aria-label="Outlook" className="ml-[9px] flex w-10 items-center justify-center border-b-2 border-[#76b9ed]">
      <svg viewBox="0 0 24 24" className="size-6" aria-hidden="true">
        <path d="M13 6h10v12H13z" fill="#fff" />
        <path d="m14 8 4 5 5-6" fill="none" stroke="#0f6fc6" strokeWidth="1.500" />
        <path d="m0 3 14-3v24L0 21z" fill="#0f6fc6" />
        <ellipse cx="7" cy="12" rx="3" ry="4" fill="none" stroke="#fff" strokeWidth="2" />
      </svg>
    </button>
    <button type="button" aria-label="PRODAT" className="ml-[9px] flex w-10 items-center justify-center border-b-2 border-[#76b9ed]">
      <BrandMark className="h-5 w-6" />
    </button>
    <div className="ml-auto flex items-center">
      <span className="mr-[10px] h-4 w-[4px] border-x border-[#4a4a4a]" />
      <button type="button">Desktop</button>
      <button type="button" aria-label="Weitere" className="ml-[7px] pb-5 text-[16px] leading-5">»</button>
      <button type="button" aria-label="Ausgeblendete Symbole" className="ml-[10px]"><ChevronUp className="size-[16px]" strokeWidth={2} /></button>
      <svg viewBox="0 0 16 14" className="ml-2 h-[14px] w-4" fill="none" stroke="#f0f0f0" aria-hidden="true">
        <path d="M5 1.500h10.500v8H3.500V6M9.500 10v3M6 13.500h7M.5 1.500h4v4h-4zM2.500 6v7" />
      </svg>
      <p className="ml-[6px] w-[62px] text-center leading-[18px]">10:23<br />18.09.2025</p>
      <button type="button" aria-label="Benachrichtigungen" className="ml-[14px]">
        <svg viewBox="0 0 16 16" className="size-4" aria-hidden="true">
          <path d="M0 0h16v12H5l-3 3v-3H0z" fill="#fff" />
          <path d="M3 3.500h10M3 6.500h10M3 9.500h6" stroke="#101010" />
          <circle cx="12.500" cy="12.500" r="3" fill="#101010" stroke="#fff" />
          <path d="m10.500 14.500 4-4" stroke="#fff" />
        </svg>
      </button>
      <span className="ml-5 h-10 w-[5px] border-l border-[#6a6a6a]" />
    </div>
  </footer>
);

export default function App() {
  return (
    <div className="flex min-h-screen flex-col bg-[#474957] font-[Roboto,'Noto_Sans',sans-serif] text-black">
      <Gradients />
      <TitleBar />
      <div className="flex flex-1">
        <div className="flex shrink-0 pr-[51px] font-['Liberation_Sans',Arial,sans-serif]">
          <SideStrip />
          <MainMenu />
        </div>
        <Workspace />
      </div>
      <Taskbar />
    </div>
  );
}
